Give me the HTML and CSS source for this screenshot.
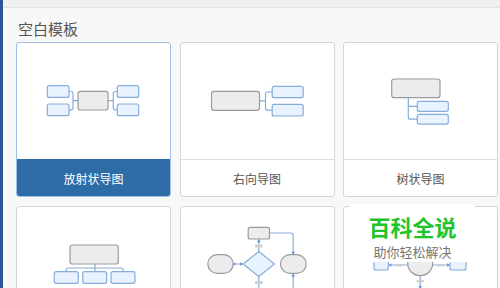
FILE: index.html
```html
<!DOCTYPE html>
<html lang="zh">
<head>
  <meta charset="UTF-8" />
  <title>空白模板</title>
  <link rel="stylesheet" href="styles.css">
</head>
<body>
  <div class="app">
    <div class="rail"></div>
    <div class="main">
      <div class="topbar"></div>
      <div class="content">
        <h2 class="titulo">空白模板</h2>

        <div class="rejilla">
          <!-- Radial -->
          <div class="tarjeta activa">
            <div class="miniatura">
              <svg viewBox="0 0 153 116" width="153" height="116">
                <g class="lazo">
                  <path d="M52 48.5H54Q56 48.5 56 50.5V64.8Q56 66.8 54 66.8H52M56 57.7H61"/>
                  <path d="M100.3 48.5H98.3Q96.3 48.5 96.3 50.5V64.8Q96.3 66.8 98.3 66.8H100.3M96.3 57.7H91"/>
                </g>
                <rect class="azul" x="30.3" y="42.7" width="21.7" height="11.7" rx="2"/>
                <rect class="azul" x="30.3" y="61" width="21.7" height="11.7" rx="2"/>
                <rect class="azul" x="100.3" y="42.7" width="21.4" height="11.7" rx="2"/>
                <rect class="azul" x="100.3" y="61" width="21.4" height="11.7" rx="2"/>
                <rect class="gris" x="61" y="48.3" width="30" height="18.7" rx="2.5"/>
              </svg>
            </div>
            <div class="pie">放射状导图</div>
          </div>

          <!-- Derecha -->
          <div class="tarjeta">
            <div class="miniatura">
              <svg viewBox="0 0 153 116" width="153" height="116">
                <path class="lazo" d="M91.2 49H86.5Q84.5 49 84.5 51V65.2Q84.5 67.2 86.5 67.2H91.2M84.5 57.8H78.5"/>
                <rect class="gris" x="30.5" y="48.3" width="48" height="19" rx="2.5"/>
                <rect class="azul" x="91.2" y="43.3" width="31" height="11.4" rx="2"/>
                <rect class="azul" x="91.2" y="61.3" width="31" height="11.7" rx="2"/>
              </svg>
            </div>
            <div class="pie">右向导图</div>
          </div>

          <!-- Árbol -->
          <div class="tarjeta">
            <div class="miniatura">
              <svg viewBox="0 0 153 116" width="153" height="116">
                <path class="lazo" d="M64.3 54.7V74.2Q64.3 76.2 66.3 76.2H73.3M64.3 61.3Q64.3 63.3 66.3 63.3H73.3"/>
                <rect class="gris" x="47.7" y="36" width="48.3" height="18.7" rx="2.5"/>
                <rect class="azul" x="73.3" y="58.3" width="31" height="10" rx="2"/>
                <rect class="azul" x="73.3" y="71.3" width="31" height="9.8" rx="2"/>
              </svg>
            </div>
            <div class="pie">树状导图</div>
          </div>

          <!-- Organigrama -->
          <div class="tarjeta">
            <div class="miniatura">
              <svg viewBox="0 0 153 116" width="153" height="116">
                <path class="lazo" d="M49.3 64.7V63Q49.3 61 51.3 61H104Q106 61 106 63V64.7M78 57V64.7"/>
                <rect class="gris" x="53" y="38" width="48.3" height="19" rx="2.5"/>
                <rect class="azul" x="37.3" y="64.7" width="24" height="11.6" rx="2"/>
                <rect class="azul" x="65.7" y="64.7" width="24" height="11.6" rx="2"/>
                <rect class="azul" x="94" y="64.7" width="24" height="11.6" rx="2"/>
              </svg>
            </div>
            <div class="pie"></div>
          </div>

          <!-- Flujo -->
          <div class="tarjeta">
            <div class="miniatura">
              <svg viewBox="0 0 153 116" width="153" height="116">
                <g class="lazo">
                  <path d="M77.8 32V44.5M52.2 57H61M88.5 26H110Q112.2 26 112.2 28.2V46.5M77.8 69.5V90M112.2 67.5V90"/>
                </g>
                <g class="punta">
                  <polygon points="77.8,32.3 76,35.2 79.6,35.2"/>
                  <polygon points="62,57 59.2,55.2 59.2,58.8"/>
                  <polygon points="112.2,47.7 110.4,44.8 114,44.8"/>
                  <polygon points="112.2,66.5 110.4,69.4 114,69.4"/>
                  <circle cx="53.3" cy="57" r="1.2"/>
                </g>
                <rect class="etiq" x="74" y="37.5" width="7.6" height="3"/>
                <rect class="etiq" x="74" y="74" width="7.6" height="3"/>
                <rect class="gris" x="67.2" y="20.3" width="21.3" height="11.7" rx="2"/>
                <rect class="gris" x="26.8" y="47.7" width="25.4" height="18.6" rx="9.3"/>
                <rect class="gris" x="99.5" y="47.7" width="25.7" height="18.6" rx="9.3"/>
                <polygon class="azul" points="77.8,44.5 93.6,57 77.8,69.5 62,57"/>
              </svg>
            </div>
            <div class="pie"></div>
          </div>

          <!-- Proceso -->
          <div class="tarjeta">
            <div class="miniatura">
              <svg viewBox="0 0 153 116" width="153" height="116">
                <path class="lazo" d="M63.7 58H45.5M88.7 58H104.8M76.2 68.7V90"/>
                <g class="punta">
                  <polygon points="44.5,58 47.3,56.2 47.3,59.8"/>
                  <polygon points="106,58 103.2,56.2 103.2,59.8"/>
                  <polygon points="76.2,82 74.4,79.2 78,79.2"/>
                </g>
                <rect class="etiq" x="51" y="57" width="7" height="2.4"/>
                <rect class="etiq" x="93" y="57" width="7" height="2.4"/>
                <rect class="etiq" x="72.7" y="73" width="7" height="2.4"/>
                <rect class="azul" x="30" y="46" width="14.3" height="17" rx="2"/>
                <rect class="azul" x="106" y="46" width="16" height="17" rx="2"/>
                <circle class="gris" cx="76.2" cy="56.2" r="12.5"/>
              </svg>
            </div>
            <div class="pie"></div>
          </div>
        </div>
      </div>
    </div>
  </div>

  <!-- Marca de agua -->
  <div class="marca">
    <div class="marca-titulo">百科全说</div>
    <div class="marca-sub">助你轻松解决</div>
  </div>
</body>
</html>
```

FILE: styles.css
```css
/* ---------- Base ---------- */
*{box-sizing:border-box}
html,body{height:100%}
body{
  margin:0;
  overflow:hidden;
  font-family:"Noto Sans CJK SC","Noto Sans",sans-serif;
  color:#555;
  background:#f8f8f8;
}

/* ---------- Marco ---------- */
.app{display:flex;height:100%}
.rail{width:3px;flex:none;background:#2b579a}
.main{flex:1;min-width:0}
.topbar{
  height:8px;
  background:#efefef;
  border-bottom:1px solid #e2e2e2;
}
.content{padding:11px 0 0 13px}

.titulo{
  margin:0 0 3px;
  padding-left:2px;
  font-size:15px;
  line-height:20px;
  font-weight:400;
  color:#555;
}

/* ---------- Tarjetas ---------- */
.rejilla{
  display:grid;
  grid-template-columns:repeat(3,155px);
  column-gap:8.5px;
  row-gap:9px;
}
.tarjeta{
  height:155px;
  display:flex;
  flex-direction:column;
  background:#fff;
  border:1px solid #d6d6d6;
  border-radius:3px;
  overflow:hidden;
}
.miniatura{height:116px;flex:none}
.miniatura svg{display:block}
.pie{
  flex:1;
  display:flex;
  align-items:center;
  justify-content:center;
  border-top:1px solid #dedede;
  font-size:12px;
  color:#555;
}
.tarjeta.activa{border-color:#a0bfe2}
.tarjeta.activa .pie{
  background:#2e6ca7;
  border-top-color:#2e6ca7;
  color:#fff;
}

/* ---------- Diagramas ---------- */
.lazo,.lazo path{fill:none;stroke:#86acdb;stroke-width:1.2}
.azul{fill:#e9f3ff;stroke:#86acdb;stroke-width:1.2}
.gris{fill:#ececec;stroke:#9b9b9b;stroke-width:1.2}
.punta{fill:#5d8fcf}
.etiq{fill:#cfcfcf}

/* ---------- Marca de agua ---------- */
.marca{
  position:absolute;
  left:350px;
  top:204px;
  width:125px;
  height:58px;
  background:#fff;
  text-align:center;
}
.marca-titulo{
  margin-top:6px;
  font-size:22px;
  line-height:32px;
  font-weight:700;
  color:#1fc42b;
}
.marca-sub{
  font-size:13px;
  line-height:19px;
  color:#777;
}
```
